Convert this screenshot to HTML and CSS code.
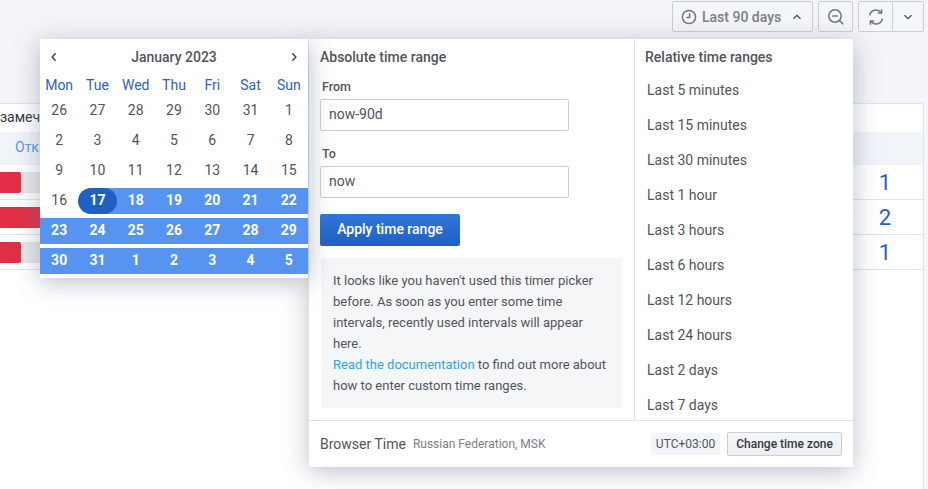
FILE: index.html
```html
<!DOCTYPE html>
<html lang="ru">
<head>
  <meta charset="UTF-8" />
  <title>Dashboard</title>
  <link rel="stylesheet" href="styles.css">
</head>
<body>

<div class="toolbar">
  <button class="tool time-btn">
    <svg class="ico" viewBox="0 0 16 16"><circle cx="8" cy="8" r="6.6"/><path d="M8.6 4.2v4.2H5.4"/></svg>
    <span class="time-label">Last 90 days</span>
    <svg class="chev" viewBox="0 0 10 6"><path d="M1.5 4.8 5 1.4l3.5 3.4"/></svg>
  </button>
  <button class="tool zoom-btn">
    <svg class="ico big" viewBox="0 0 18 18"><circle cx="8" cy="8" r="6.2"/><path d="M5.2 8h5.6M12.6 12.6l3.6 3.6"/></svg>
  </button>
  <div class="tool-group">
    <button class="tool refresh-btn">
      <svg class="ico big" viewBox="0 0 18 18"><path d="M2.6 7.4A6.5 6.5 0 0 1 14 4.4M15.4 10.6A6.5 6.5 0 0 1 4 13.6"/><path d="M14.6 1.2v3.8h-3.8M3.4 16.8V13h3.8"/></svg>
    </button>
    <button class="tool more-btn">
      <svg class="chev" viewBox="0 0 10 6"><path d="M1.5 1.2 5 4.6l3.5-3.4"/></svg>
    </button>
  </div>
</div>

<div class="panel">
  <div class="panel-title">замеч</div>
  <div class="panel-head"><a class="head-link">Отк</a></div>
  <div class="row"><div class="bar"><div class="bar-fill short"></div></div><span class="count">1</span></div>
  <div class="row"><div class="bar"><div class="bar-fill long"></div></div><span class="count">2</span></div>
  <div class="row"><div class="bar"><div class="bar-fill short"></div></div><span class="count">1</span></div>
</div>

<div class="picker">
  <div class="calendar">
    <div class="cal-head">
      <svg class="cal-arrow" viewBox="0 0 6 10"><path d="M4.6 1.2 1.2 5l3.4 3.8"/></svg>
      <span class="cal-month">January 2023</span>
      <svg class="cal-arrow" viewBox="0 0 6 10"><path d="M1.4 1.2 4.8 5 1.4 8.8"/></svg>
    </div>
    <div class="cal-grid weekdays">
      <span>Mon</span><span>Tue</span><span>Wed</span><span>Thu</span><span>Fri</span><span>Sat</span><span>Sun</span>
    </div>
    <div class="cal-grid">
      <span>26</span><span>27</span><span>28</span><span>29</span><span>30</span><span>31</span><span>1</span>
    </div>
    <div class="cal-grid">
      <span>2</span><span>3</span><span>4</span><span>5</span><span>6</span><span>7</span><span>8</span>
    </div>
    <div class="cal-grid">
      <span>9</span><span>10</span><span>11</span><span>12</span><span>13</span><span>14</span><span>15</span>
    </div>
    <div class="cal-grid">
      <span>16</span><span class="sel start">17</span><span class="sel">18</span><span class="sel">19</span><span class="sel">20</span><span class="sel">21</span><span class="sel">22</span>
    </div>
    <div class="cal-grid">
      <span class="sel">23</span><span class="sel">24</span><span class="sel">25</span><span class="sel">26</span><span class="sel">27</span><span class="sel">28</span><span class="sel">29</span>
    </div>
    <div class="cal-grid">
      <span class="sel">30</span><span class="sel">31</span><span class="sel">1</span><span class="sel">2</span><span class="sel">3</span><span class="sel">4</span><span class="sel">5</span>
    </div>
  </div>

  <div class="picker-body">
    <div class="absolute">
      <div class="section-title">Absolute time range</div>
      <label class="field-label first">From</label>
      <input class="field" value="now-90d" />
      <label class="field-label">To</label>
      <input class="field" value="now" />
      <button class="apply">Apply time range</button>
      <div class="info">
        It looks like you haven't used this timer picker before. As soon as you enter some time intervals, recently used intervals will appear here.<br>
        <a class="doc-link">Read the documentation</a> to find out more about how to enter custom time ranges.
      </div>
    </div>
    <div class="relative-list">
      <div class="section-title">Relative time ranges</div>
      <ul>
        <li>Last 5 minutes</li>
        <li>Last 15 minutes</li>
        <li>Last 30 minutes</li>
        <li>Last 1 hour</li>
        <li>Last 3 hours</li>
        <li>Last 6 hours</li>
        <li>Last 12 hours</li>
        <li>Last 24 hours</li>
        <li>Last 2 days</li>
        <li>Last 7 days</li>
      </ul>
    </div>
  </div>

  <div class="picker-foot">
    <span class="tz-name">Browser Time</span>
    <span class="tz-place">Russian Federation, MSK</span>
    <span class="tz-offset">UTC+03:00</span>
    <button class="tz-change">Change time zone</button>
  </div>
</div>

</body>
</html>
```

FILE: styles.css
```css
* {
  box-sizing: border-box;
}
html, body {
  height: 100%;
}
body {
  margin: 0;
  overflow: hidden;
  background: #f4f5f8;
  font-family: Roboto, "Liberation Sans", sans-serif;
  font-size: 14px;
  color: #52545c;
}
button {
  font-family: inherit;
  cursor: pointer;
}

/* top toolbar */
.toolbar {
  display: flex;
  justify-content: flex-end;
  gap: 5px;
  height: 103px;
  padding: 1px 4px 0 0;
}
.tool {
  display: flex;
  align-items: center;
  justify-content: center;
  height: 31px;
  padding: 0;
  background: #f5f6f9;
  border: 1px solid #c7d0d9;
  border-radius: 2px;
  color: #7b8087;
}
.time-btn {
  width: 141px;
  padding: 0 8px;
  justify-content: flex-start;
}
.time-label {
  margin-left: 5px;
  font-size: 14px;
  font-weight: 500;
  color: #7b8087;
}
.time-btn .chev {
  margin-left: auto;
  margin-right: 2px;
}
.zoom-btn {
  width: 35px;
}
.tool-group {
  display: flex;
}
.refresh-btn {
  width: 35px;
  border-radius: 2px 0 0 2px;
}
.more-btn {
  width: 31px;
  border-left: 0;
  border-radius: 0 2px 2px 0;
}
.ico {
  width: 16px;
  height: 16px;
  fill: none;
  stroke: #6e7580;
  stroke-width: 1.5;
}
.ico.big {
  width: 18px;
  height: 18px;
}
.chev {
  width: 10px;
  height: 6px;
  fill: none;
  stroke: #464c54;
  stroke-width: 1.3;
}

/* panel behind the picker */
.panel {
  width: 924px;
  height: 386px;
  background: #fff;
  border: 1px solid #dde4ed;
  border-left: 0;
  border-bottom: 0;
  border-radius: 0 3px 0 0;
}
.panel-title {
  height: 28px;
  padding-top: 5px;
  color: #343b40;
}
.panel-head {
  height: 33px;
  padding: 7px 15px;
  background: #f1f4f9;
}
.head-link {
  color: #5794f2;
}
.row {
  display: flex;
  align-items: center;
  justify-content: space-between;
  height: 35px;
  padding: 0 32px 0 0;
  border-bottom: 1px solid #dde4ed;
}
.bar {
  width: 100px;
  height: 21px;
  background: #e6e7ea;
}
.bar-fill {
  height: 100%;
  background: #e02f44;
  border-radius: 0 2px 2px 0;
}
.bar-fill.short {
  width: 21px;
}
.bar-fill.long {
  width: 42px;
}
.count {
  font-size: 22px;
  color: #1f60c4;
}

/* time picker popover */
.picker {
  position: absolute;
  left: 309px;
  top: 39px;
  width: 544px;
  height: 428px;
  display: flex;
  flex-direction: column;
  background: #fff;
  box-shadow: 0 4px 24px rgba(100, 115, 135, 0.45);
}
.calendar {
  position: absolute;
  left: -269px;
  top: 0;
  width: 268px;
  height: 239px;
  background: #fff;
  box-shadow: 0 4px 24px rgba(100, 115, 135, 0.45);
}
.cal-head {
  display: flex;
  justify-content: space-between;
  align-items: center;
  height: 36px;
  padding: 0 11px;
}
.cal-month {
  font-weight: 500;
}
.cal-arrow {
  width: 6px;
  height: 10px;
  fill: none;
  stroke: #464c54;
  stroke-width: 1.5;
}
.cal-grid {
  display: grid;
  grid-template-columns: repeat(7, 1fr);
  height: 30px;
  padding: 3px 0 1px;
}
.cal-grid span {
  display: flex;
  align-items: center;
  justify-content: center;
  height: 26px;
  padding-bottom: 2px;
}
.weekdays {
  height: 20px;
  padding: 0;
  color: #2b62c9;
}
.weekdays span {
  height: 20px;
  padding-bottom: 0;
}
.cal-grid .sel {
  background: #5794f2;
  color: #fff;
  font-weight: 700;
}
.cal-grid .start {
  position: relative;
  z-index: 0;
}
.cal-grid .start::before {
  content: "";
  position: absolute;
  inset: 0;
  z-index: -1;
  background: #1f60c4;
  border-radius: 13px;
}
.cal-grid .start::after {
  content: "";
  position: absolute;
  inset: 0 50% 0 0;
  z-index: -2;
  background: #fff;
}

.picker-body {
  display: flex;
  height: 382px;
  border-bottom: 1px solid #dde4ed;
}
.absolute {
  width: 326px;
  padding: 0 11px;
  border-right: 1px solid #dde4ed;
}
.section-title {
  padding-top: 10px;
  font-weight: 500;
  line-height: 16px;
}
.field-label {
  display: block;
  margin: 16px 0 5px 2px;
  font-size: 12.5px;
  font-weight: 500;
  line-height: 14px;
}
.field-label.first {
  margin-top: 15px;
}
.field {
  display: block;
  width: 249px;
  height: 32px;
  padding: 0 8px 2px;
  border: 1px solid #c7d0d9;
  border-radius: 2px;
  background: #fff;
  font: 14px Roboto, sans-serif;
  color: #52545c;
}
.apply {
  display: block;
  width: 140px;
  height: 32px;
  margin-top: 16px;
  padding: 0 0 2px;
  border: 0;
  border-radius: 2px;
  background: linear-gradient(#3274d9, #1f60c4);
  color: #fff;
  font-size: 14px;
  font-weight: 500;
}
.info {
  width: 301px;
  height: 150px;
  margin: 12px 0 0 1px;
  padding: 12px;
  background: #f5f6f8;
  font-size: 13px;
  line-height: 21px;
  color: #52545c;
}
.doc-link {
  color: #33a2e5;
}
.relative-list {
  flex: 1;
  overflow: hidden;
}
.relative-list .section-title {
  padding-left: 10px;
}
.relative-list ul {
  margin: 0;
  padding: 8px 0 0 12px;
  list-style: none;
}
.relative-list li {
  height: 35px;
  line-height: 35px;
  color: #52545c;
}

.picker-foot {
  display: flex;
  align-items: center;
  flex: 1;
  padding: 0 11px;
}
.tz-name {
  color: #52545c;
}
.tz-place {
  margin-left: 7px;
  font-size: 12px;
  color: #7b8087;
}
.tz-offset {
  margin-left: auto;
  width: 69px;
  height: 22px;
  line-height: 22px;
  text-align: center;
  background: #f1f4f9;
  font-size: 12px;
  border-radius: 2px;
}
.tz-change {
  width: 115px;
  height: 24px;
  margin-left: 7px;
  padding: 0;
  border: 1px solid #c7d0d9;
  border-radius: 2px;
  background: linear-gradient(#f5f6f9, #eceef2);
  color: #343b40;
  font-size: 12px;
  font-weight: 500;
}
```
